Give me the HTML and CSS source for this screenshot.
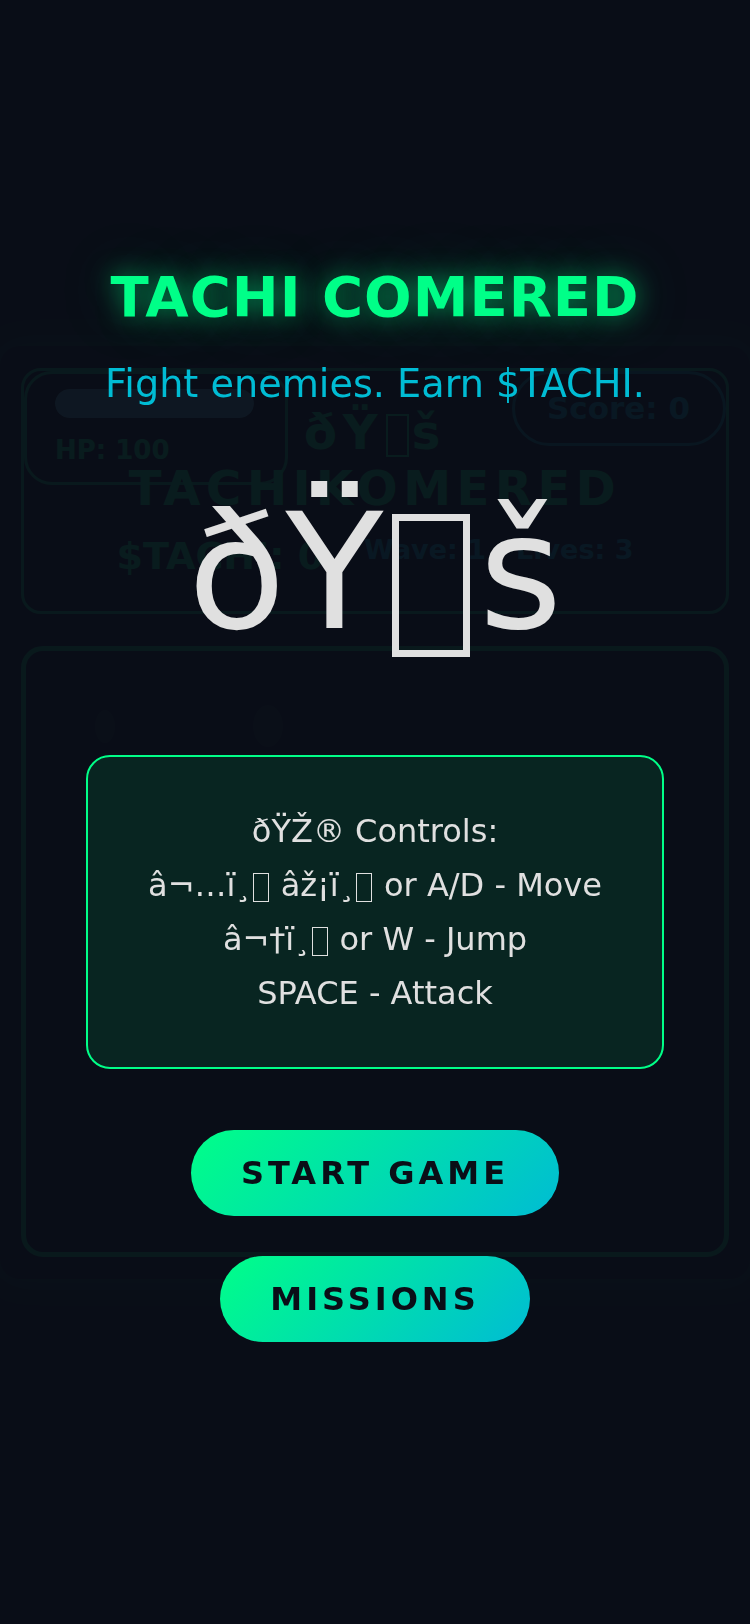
FILE: index.html
```html
<!DOCTYPE html>
<html lang="en">
<head>
<meta charset="utf-8">
<title>Tachi Comered</title>
<link rel="stylesheet" href="styles.css">
</head>
<body>
<div class="game">
  <div class="hud">
    <div class="hp-box">
      <div class="hp-bar"><div class="hp-fill" style="width:100%"></div></div>
      <div class="hp-text">HP: 100</div>
    </div>
    <div class="hud-center">
      <h1 class="game-title"><span>ðŸ<span class="tofu"></span>š</span><span>TACHIKOMERED</span></h1>
      <div class="stats">
        <span class="tachi">$TACHI: 0</span>
        <span class="wave">Wave: 1</span>
        <span class="lives">Lives: 3</span>
      </div>
    </div>
    <div class="score-box">Score: 0</div>
  </div>
  <div class="arena">
    <div class="sprite player"></div>
    <div class="sprite enemy"></div>
  </div>
</div>

<div class="overlay">
  <h2 class="title">TACHI COMERED</h2>
  <p class="subtitle">Fight enemies. Earn $TACHI.</p>
  <div class="big-icon">ðŸ<span class="tofu"></span>š</div>
  <div class="controls">
    <div>ðŸŽ® Controls:</div>
    <div>â¬…ï¸<span class="tofu"></span> âž¡ï¸<span class="tofu"></span> or A/D - Move</div>
    <div>â¬†ï¸<span class="tofu"></span> or W - Jump</div>
    <div>SPACE - Attack</div>
  </div>
  <button class="btn btn-start">START GAME</button>
  <button class="btn btn-missions">MISSIONS</button>
</div>
</body>
</html>
```
FILE: styles.css
```css
html, body {
  margin: 0;
  padding: 0;
}

body {
  height: 1624px;
  background: #0a0e17;
  font-family: "DejaVu Sans", "Noto Sans", sans-serif;
  color: #e0e0e0;
  display: flex;
  align-items: center;
  justify-content: center;
  overflow: hidden;
}

/* missing-glyph box (renders like a font's .notdef) */
.tofu {
  display: inline-block;
  box-sizing: border-box;
  width: 0.49em;
  height: 0.89em;
  margin: 0 0.054em;
  vertical-align: -0.18em;
  border: 0.045em solid currentColor;
}

/* ---------- background game (under overlay) ---------- */
.game {
  width: 750px;
  box-sizing: border-box;
  padding: 22px 21px 22px;
  display: flex;
  flex-direction: column;
  gap: 32px;
  border-radius: 20px;
  background: rgba(0, 0, 0, 0.25);
  box-shadow: 0 0 30px rgba(0, 255, 136, 0.35);
}

.hud {
  position: relative;
  height: 246px;
  box-sizing: border-box;
  border: 3px solid rgba(0, 255, 136, 0.8);
  border-radius: 20px;
  display: flex;
  align-items: center;
  justify-content: center;
}

.hp-box {
  position: absolute;
  top: 0;
  left: 0;
  width: 264px;
  height: 114px;
  box-sizing: border-box;
  border: 3px solid rgba(0, 255, 136, 0.8);
  border-radius: 28px;
  padding: 15px 0 0 28px;
}

.hp-bar {
  width: 199px;
  height: 29px;
  border-radius: 15px;
  background: rgba(255, 255, 255, 0.15);
  overflow: hidden;
}

.hp-fill {
  height: 100%;
  background: rgb(80, 170, 200);
  border-radius: 15px;
}

.hp-text {
  margin-top: 17px;
  font-size: 26px;
  line-height: 30px;
  font-weight: bold;
  color: #00ff88;
}

.score-box {
  position: absolute;
  top: 0;
  right: 0;
  width: 214px;
  height: 75px;
  box-sizing: border-box;
  border: 3px solid rgba(0, 188, 212, 0.8);
  border-radius: 38px;
  padding-left: 32px;
  font-size: 31px;
  line-height: 69px;
  font-weight: bold;
  color: #00bcd4;
}

.hud-center {
  width: 200px;
  display: flex;
  flex-direction: column;
  align-items: center;
}

.game-title {
  margin: 0;
  display: flex;
  flex-direction: column;
  align-items: center;
  font-size: 48px;
  line-height: 56px;
  letter-spacing: 5.6px;
  color: #00ff88;
  white-space: nowrap;
}

.stats {
  margin-top: 18px;
  display: flex;
  align-items: flex-start;
  gap: 40px;
  white-space: nowrap;
  font-weight: bold;
}

.tachi {
  font-size: 38px;
  line-height: 44px;
  color: #00ff88;
}

.wave, .lives {
  font-size: 27px;
  line-height: 32px;
  color: #00bcd4;
}

.wave {
  margin-right: -10px;
}

.arena {
  position: relative;
  height: 611px;
  box-sizing: border-box;
  border: 5px solid rgba(0, 255, 136, 0.75);
  border-radius: 22px;
}

.sprite {
  position: absolute;
  border-radius: 50%;
  background: rgba(140, 200, 220, 0.15);
}

.player {
  left: 69px;
  top: 59px;
  width: 20px;
  height: 33px;
}

.enemy {
  left: 227px;
  top: 54px;
  width: 30px;
  height: 42px;
}

/* ---------- overlay ---------- */
.overlay {
  position: fixed;
  inset: 0;
  background: rgba(10, 14, 23, 0.94);
  display: flex;
  flex-direction: column;
  align-items: center;
  box-sizing: border-box;
  padding-top: 264px;
}

.title {
  margin: 0;
  font-size: 56px;
  line-height: 65px;
  font-weight: bold;
  letter-spacing: 1px;
  color: #00ff88;
  text-shadow: 0 0 25px rgba(0, 255, 136, 0.5), 0 0 60px rgba(0, 255, 136, 0.25);
}

.subtitle {
  margin: 33px 0 0;
  font-size: 38.2px;
  line-height: 44px;
  color: #00bcd4;
}

.big-icon {
  margin-top: 74px;
  font-size: 160px;
  line-height: 186px;
  color: #e0e0e0;
}

.controls {
  margin-top: 89px;
  width: 578px;
  box-sizing: border-box;
  padding: 47px 0;
  border: 2px solid #00ff88;
  border-radius: 24px;
  background: rgba(0, 255, 136, 0.1);
  text-align: center;
  font-size: 32px;
  line-height: 54px;
  color: #e0e0e0;
}

.controls .tofu {
  border-width: 0.06em;
}

.btn {
  border: none;
  border-radius: 50px;
  padding: 24px 50px;
  font-family: "DejaVu Sans", "Noto Sans", sans-serif;
  font-size: 32px;
  line-height: 38px;
  font-weight: bold;
  letter-spacing: 4px;
  color: #0a0e17;
  background: linear-gradient(135deg, #00ff88, #00bcd4);
}

.btn-start {
  margin-top: 61px;
}

.btn-missions {
  margin-top: 40px;
}
```
